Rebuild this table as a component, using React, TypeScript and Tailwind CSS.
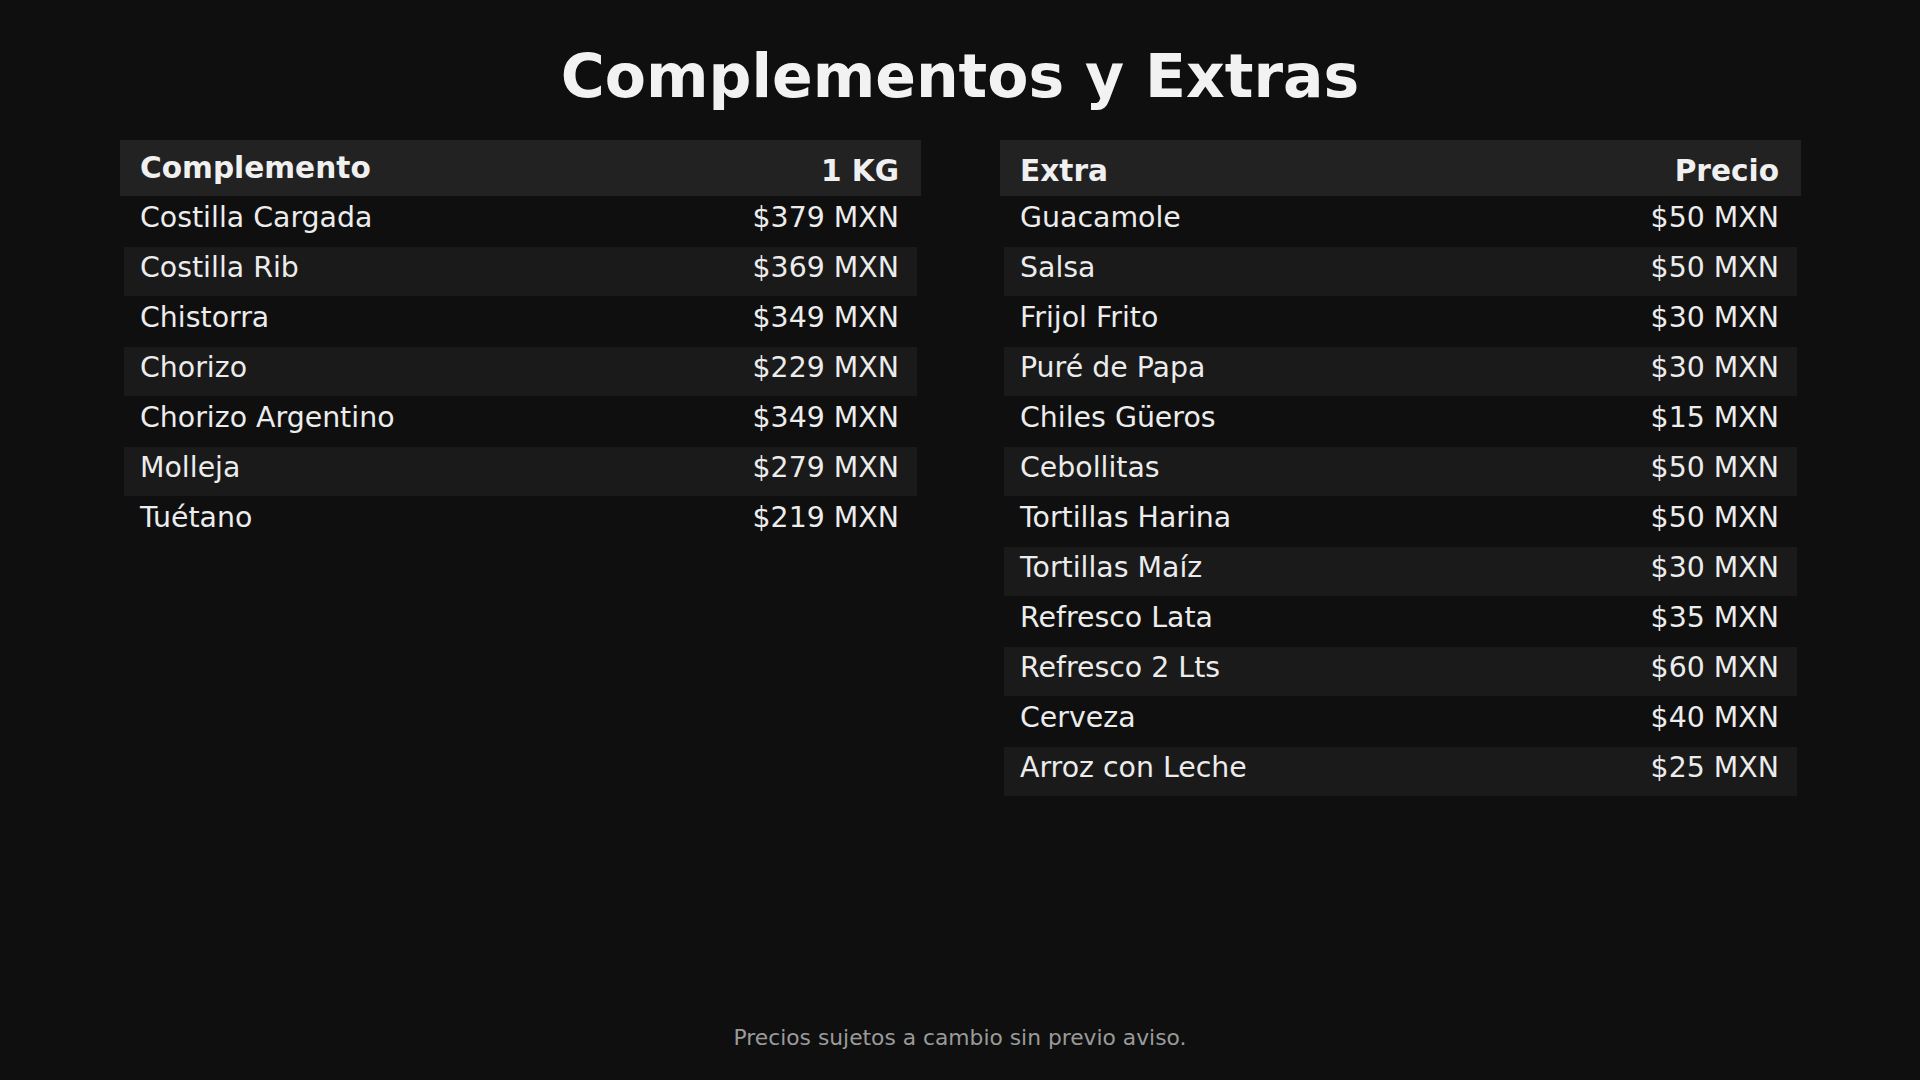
const complementos = [
  { name: 'Costilla Cargada', price: '$379 MXN' },
  { name: 'Costilla Rib', price: '$369 MXN' },
  { name: 'Chistorra', price: '$349 MXN' },
  { name: 'Chorizo', price: '$229 MXN' },
  { name: 'Chorizo Argentino', price: '$349 MXN' },
  { name: 'Molleja', price: '$279 MXN' },
  { name: 'Tuétano', price: '$219 MXN' },
]

const extras = [
  { name: 'Guacamole', price: '$50 MXN' },
  { name: 'Salsa', price: '$50 MXN' },
  { name: 'Frijol Frito', price: '$30 MXN' },
  { name: 'Puré de Papa', price: '$30 MXN' },
  { name: 'Chiles Güeros', price: '$15 MXN' },
  { name: 'Cebollitas', price: '$50 MXN' },
  { name: 'Tortillas Harina', price: '$50 MXN' },
  { name: 'Tortillas Maíz', price: '$30 MXN' },
  { name: 'Refresco Lata', price: '$35 MXN' },
  { name: 'Refresco 2 Lts', price: '$60 MXN' },
  { name: 'Cerveza', price: '$40 MXN' },
  { name: 'Arroz con Leche', price: '$25 MXN' },
]

type Item = { name: string; price: string }

function PriceTable({
  label,
  priceLabel,
  items,
  raiseLabel,
}: {
  label: string
  priceLabel: string
  items: Item[]
  raiseLabel?: boolean
}) {
  return (
    <div className="flex flex-col gap-px">
      <div className="flex h-[56px] items-center justify-between bg-[#222222] pl-5 pr-[22px] text-[29.6px] font-bold text-[#f0f0f0]">
        <span className={raiseLabel ? 'mt-px' : 'mt-[7px]'}>{label}</span>
        <span className="mt-[7px]">{priceLabel}</span>
      </div>
      {items.map((item, i) => (
        <div
          key={item.name}
          className={`mx-1 flex h-[49px] items-center justify-between pb-[6px] pl-4 pr-[18px] text-[28.4px] text-[#ececec] ${
            i % 2 === 1 ? 'bg-[#1a1a1a]' : ''
          }`}
        >
          <span>{item.name}</span>
          <span>{item.price}</span>
        </div>
      ))}
    </div>
  )
}

export default function App() {
  return (
    <div
      className="flex h-screen flex-col bg-[#0f0f0f] text-[#f0f0f0]"
      style={{ fontFamily: '"DejaVu Sans", Verdana, sans-serif' }}
    >
      <h1 className="pt-10 text-center text-[60px] font-bold leading-[72px] text-[#f2f2f2]">
        Complementos y Extras
      </h1>

      <main className="mt-7 grid flex-1 grid-cols-2 items-start gap-[79px] pl-[120px] pr-[119px]">
        <PriceTable label="Complemento" priceLabel="1 KG" items={complementos} raiseLabel />
        <PriceTable label="Extra" priceLabel="Precio" items={extras} />
      </main>

      <footer className="pb-[29px] text-center text-[21.8px] leading-[26px] text-[#9a9a9a]">
        Precios sujetos a cambio sin previo aviso.
      </footer>
    </div>
  )
}
